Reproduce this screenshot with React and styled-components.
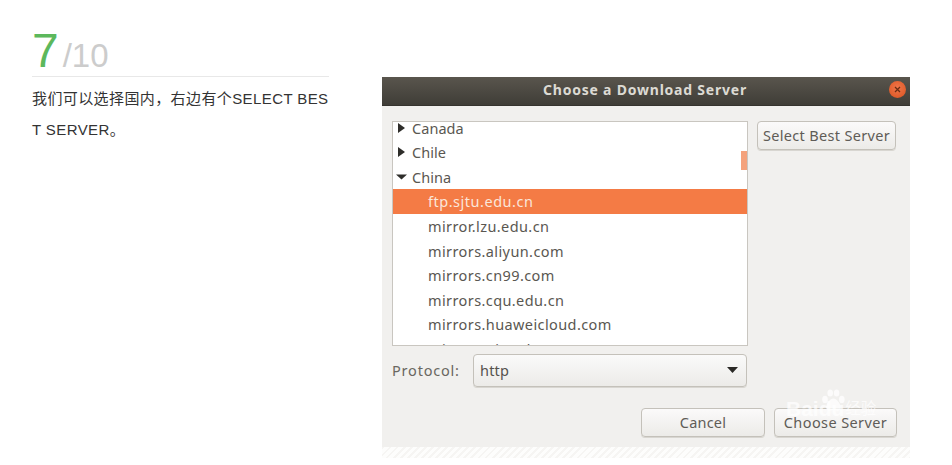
import React from 'react';
import styled, { createGlobalStyle } from 'styled-components';

const Global = createGlobalStyle`
  html, body { margin: 0; padding: 0; background: #fff; }
  * { box-sizing: border-box; }
`;
const Page = styled.div`
  display: flex;
  align-items: flex-start;
  width: 952px;
  height: 465px;
  overflow: hidden;
  padding-left: 32px;
  background: #fff;
`;
const Side = styled.div`
  width: 297px;
  padding-top: 25px;
  font-family: "Liberation Sans", Arial, "Noto Sans CJK SC", sans-serif;
`;
const Heading = styled.div`
  display: flex;
  align-items: baseline;
  height: 52px;
  border-bottom: 1px solid #e8e8e8;
  line-height: 52px;
`;
const Step = styled.span`
  font-size: 48px;
  color: #5cb85c;
`;
const Total = styled.span`
  font-size: 33px;
  color: #cccccc;
  margin-left: 4px;
`;
const Desc = styled.p`
  margin: 0;
  padding-top: 7px;
  width: 297px;
  font-size: 15px;
  letter-spacing: 0.4px;
  line-height: 30.5px;
  color: #333;
  word-break: break-all;
`;
const Shot = styled.div`
  position: relative;
  width: 528px;
  margin: 77px 0 0 53px;
  font-family: "Noto Sans", "Open Sans", sans-serif;
  color: #5a5751;
`;
const TitleBar = styled.div`
  display: flex;
  align-items: center;
  justify-content: center;
  position: relative;
  height: 29px;
  padding: 0 2px 4px 0;
  background: linear-gradient(#59554d, #3f3d37);
  border-bottom: 1px solid #35332e;
  color: #dcdad3;
  font-size: 14px;
  font-weight: 700;
  letter-spacing: 0.78px;
`;
const Close = styled.span`
  position: absolute;
  right: 4px;
  top: 4px;
  width: 17px;
  height: 17px;
  border-radius: 50%;
  background: radial-gradient(circle at 50% 40%, #f0764a, #d9521f);
  display: flex;
  align-items: center;
  justify-content: center;
`;
const Body = styled.div`
  height: 341px;
  padding: 15px 13px 0 10px;
  background: #f1f0ee;
`;
const TopRow = styled.div`
  display: flex;
  align-items: flex-start;
  gap: 9px;
`;
const List = styled.div`
  position: relative;
  width: 356px;
  height: 225px;
  overflow: hidden;
  background: #fff;
  border: 1px solid #c9c6c0;
  flex: none;
`;
const Rows = styled.div`
  margin-top: -6.6px;
`;
const Row = styled.div`
  display: flex;
  align-items: center;
  height: 24.6px;
  padding-left: ${p => (p.$child ? '35px' : '3px')};
  font-size: 14.5px;
  letter-spacing: ${p => (p.$selected ? '0.52px' : p.$child ? '0.4px' : '0.05px')};
  white-space: nowrap;
  background: ${p => (p.$selected ? '#f47b45' : 'transparent')};
  color: ${p => (p.$selected ? '#fbe6da' : '#5a5751')};
`;
const Arrow = styled.svg`
  width: 16px;
  height: 12px;
  flex: none;
`;
const Thumb = styled.span`
  position: absolute;
  right: 0;
  top: 29px;
  width: 6px;
  height: 19px;
  background: #f4a27c;
`;
const Button = styled.div`
  display: flex;
  align-items: center;
  justify-content: center;
  width: ${p => p.$w}px;
  height: 29px;
  padding-bottom: 2px;
  border: 1px solid #c4c1ba;
  border-radius: 4px;
  background: linear-gradient(#fbfafa, #ecebe8);
  box-shadow: 0 1px 0 #d8d6d1;
  font-size: 14.5px;
  letter-spacing: ${p => p.$track}px;
  color: #5f5c57;
  white-space: nowrap;
  flex: none;
`;
const ProtoRow = styled.div`
  display: flex;
  align-items: center;
  margin-top: 8px;
  height: 33px;
`;
const Label = styled.span`
  width: 81px;
  padding-bottom: 2px;
  font-size: 14.5px;
  letter-spacing: 0.8px;
  color: #6a6761;
`;
const Select = styled.div`
  display: flex;
  align-items: center;
  justify-content: space-between;
  width: 274px;
  height: 33px;
  padding: 0 8px 2px 6px;
  border: 1px solid #c4c1ba;
  border-radius: 4px;
  background: linear-gradient(#fafafa, #ecebe8);
  box-shadow: 0 1px 0 #d8d6d1;
  font-size: 14.5px;
  letter-spacing: 0.2px;
  color: #55524d;
`;
const Actions = styled.div`
  display: flex;
  justify-content: flex-end;
  gap: 9px;
  margin-top: 21px;
`;
const Hatch = styled.div`
  height: 11px;
  background: repeating-linear-gradient(135deg, #f6f5f3 0 2px, #fdfdfc 2px 5px);
`;
const Watermark = styled.div`
  position: absolute;
  left: 404px;
  top: 320px;
  display: flex;
  align-items: flex-end;
  color: rgba(255, 255, 255, 0.72);
  font-family: "Liberation Sans", "Noto Sans CJK SC", sans-serif;
  font-size: 21px;
  font-weight: 700;
  line-height: 24px;
  white-space: nowrap;
`;
const WatermarkCn = styled.span`
  font-size: 15.5px;
  font-weight: 400;
  margin-left: 1px;
`;
const Paw = styled.svg`
  position: absolute;
  left: 34px;
  top: -8px;
  width: 26px;
  height: 24px;
`;

const Right = () => (
  <Arrow viewBox="0 0 16 12"><path d="M2 1 L9 6 L2 11 Z" fill="#2e2d2a" /></Arrow>
);
const Down = () => (
  <Arrow viewBox="0 0 16 12"><path d="M0 3.5 H11 L5.5 8.5 Z" fill="#2e2d2a" /></Arrow>
);

const mirrors = [
  'mirror.lzu.edu.cn',
  'mirrors.aliyun.com',
  'mirrors.cn99.com',
  'mirrors.cqu.edu.cn',
  'mirrors.huaweicloud.com',
  'mirrors.nju.edu.cn',
];

export default function App() {
  return (
    <>
      <Global />
      <Page>
        <Side>
          <Heading>
            <Step>7</Step>
            <Total>/10</Total>
          </Heading>
          <Desc>我们可以选择国内，右边有个SELECT BEST SERVER。</Desc>
        </Side>
        <Shot>
          <TitleBar>
            Choose a Download Server
            <Close>
              <svg width="7" height="7" viewBox="0 0 7 7">
                <path d="M1 1 L6 6 M6 1 L1 6" stroke="#6b2c12" strokeWidth="1.3" />
              </svg>
            </Close>
          </TitleBar>
          <Body>
            <TopRow>
              <List>
                <Rows>
                  <Row><Right />Canada</Row>
                  <Row><Right />Chile</Row>
                  <Row><Down />China</Row>
                  <Row $child $selected>ftp.sjtu.edu.cn</Row>
                  {mirrors.map(m => <Row $child key={m}>{m}</Row>)}
                </Rows>
                <Thumb />
              </List>
              <Button $w={139} $track={0.33}>Select Best Server</Button>
            </TopRow>
            <ProtoRow>
              <Label>Protocol:</Label>
              <Select>
                http
                <svg width="11" height="6" viewBox="0 0 11 6"><path d="M0 0 H11 L5.5 6 Z" fill="#2a2926" /></svg>
              </Select>
            </ProtoRow>
            <Actions>
              <Button $w={124} $track={0.2}>Cancel</Button>
              <Button $w={123} $track={0.4}>Choose Server</Button>
            </Actions>
          </Body>
          <Hatch />
          <Watermark>
            Baidu
            <Paw viewBox="0 0 32 30">
              <g fill="rgba(255,255,255,0.75)">
                <ellipse cx="6" cy="13" rx="3.5" ry="4.5" />
                <ellipse cx="12.5" cy="5" rx="3.5" ry="4.5" />
                <ellipse cx="20.5" cy="5" rx="3.5" ry="4.5" />
                <ellipse cx="27" cy="13" rx="3.5" ry="4.5" />
                <path d="M16.5 12 C21 12 27 20 25 25 C23 29 19 26 16.5 26 C14 26 10 29 8 25 C6 20 12 12 16.5 12 Z" />
              </g>
            </Paw>
            <WatermarkCn>经验</WatermarkCn>
          </Watermark>
        </Shot>
      </Page>
    </>
  );
}
